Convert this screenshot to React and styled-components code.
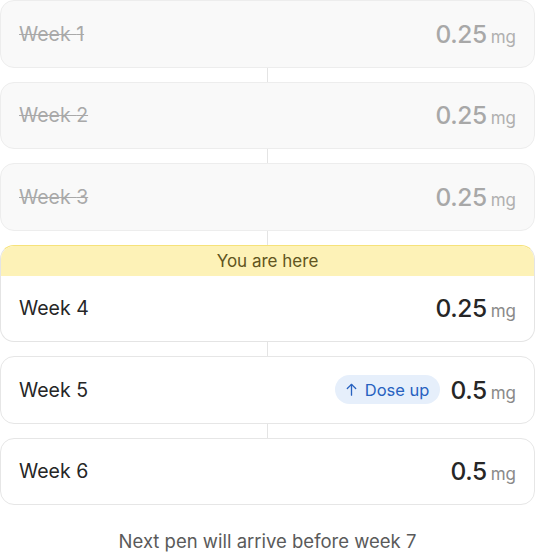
import React from "react"
import styled, { createGlobalStyle, css } from "styled-components"

const GlobalStyle = createGlobalStyle`
    body {
        margin: 0;
        background: #ffffff;
        font-family: Inter, "Noto Sans", "Liberation Sans", sans-serif;
    }
`

const weeks = [
    { week: 1, dose: "0.25", done: true },
    { week: 2, dose: "0.25", done: true },
    { week: 3, dose: "0.25", done: true },
    { week: 4, dose: "0.25", current: true },
    { week: 5, dose: "0.5", doseUp: true },
    { week: 6, dose: "0.5" },
]

// Styles
const Page = styled.div`
    width: 535px;
    display: flex;
    flex-direction: column;
`

const List = styled.div`
    display: flex;
    flex-direction: column;
`

const Connector = styled.div`
    width: 1px;
    height: 14px;
    margin-left: 267px;
    background: #e4e4e4;
`

const Card = styled.div`
    box-sizing: border-box;
    border: 1px solid #e6e6e6;
    border-radius: 14px;
    background: #ffffff;
    overflow: hidden;

    ${props =>
        props.done &&
        css`
            background: #f9f9f9;
            border-color: #ededed;
        `}

    ${props =>
        props.current &&
        css`
            border-color: #e4e4e4;
            border-top-color: #f6e27a;
        `}
`

const Banner = styled.div`
    height: 30px;
    display: flex;
    align-items: center;
    justify-content: center;
    background: #fdf2b7;
    color: #615520;
    font-size: 17px;
`

const Row = styled.div`
    box-sizing: border-box;
    height: 65.5px;
    display: flex;
    align-items: center;
    padding: 0 18px;
`

const Label = styled.span`
    flex: 1;
    font-size: 19.5px;
    color: #262626;

    ${props =>
        props.done &&
        css`
            color: #a9a9a9;
            text-decoration: line-through;
            text-decoration-thickness: 1px;
        `}
`

const Badge = styled.span`
    height: 29px;
    display: inline-flex;
    align-items: center;
    gap: 6px;
    padding: 0 11px 0 9px;
    margin-right: 10px;
    border-radius: 15px;
    background: #e6effb;
    color: #2862c0;
    font-size: 16.5px;

    svg {
        width: 15px;
        height: 15px;
    }
`

const Dose = styled.span`
    display: flex;
    align-items: baseline;
    gap: 4px;
`

const Amount = styled.span`
    font-size: 24.5px;
    font-weight: 550;
    letter-spacing: -0.4px;
    color: ${props => (props.done ? "#a8a8a8" : "#262626")};
`

const Unit = styled.span`
    font-size: 17px;
    color: ${props => (props.done ? "#b0b0b0" : "#8a8a8a")};
`

const Footer = styled.p`
    margin: 25px 0 0;
    text-align: center;
    font-size: 18.5px;
    color: #5a5a5a;
`

function ArrowUp() {
    return (
        <svg viewBox="0 0 16 16" fill="none" stroke="currentColor" strokeWidth="1.4" strokeLinecap="round" strokeLinejoin="round">
            <path d="M8 14V2.5" />
            <path d="M3.5 7L8 2.5 12.5 7" />
        </svg>
    )
}

function WeekCard({ item }) {
    return (
        <Card done={item.done} current={item.current}>
            {item.current && <Banner>You are here</Banner>}
            <Row>
                <Label done={item.done}>Week {item.week}</Label>
                {item.doseUp && (
                    <Badge>
                        <ArrowUp />
                        Dose up
                    </Badge>
                )}
                <Dose>
                    <Amount done={item.done}>{item.dose}</Amount>
                    <Unit done={item.done}>mg</Unit>
                </Dose>
            </Row>
        </Card>
    )
}

export default function App() {
    return (
        <Page>
            <GlobalStyle />
            <List>
                {weeks.map((item, i) => (
                    <React.Fragment key={item.week}>
                        {i > 0 && <Connector />}
                        <WeekCard item={item} />
                    </React.Fragment>
                ))}
            </List>
            <Footer>Next pen will arrive before week 7</Footer>
        </Page>
    )
}
